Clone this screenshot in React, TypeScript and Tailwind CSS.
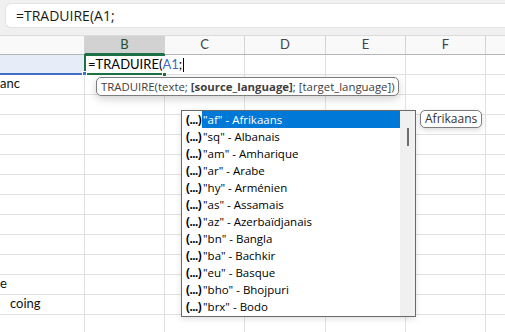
import React from "react";

const cols = [85, 80, 80, 81, 80, 80, 40];
const letters = ["", "B", "C", "D", "E", "F", ""];
const langs: [string, string][] = [
  ["af", "Afrikaans"],
  ["sq", "Albanais"],
  ["am", "Amharique"],
  ["ar", "Arabe"],
  ["hy", "Arménien"],
  ["as", "Assamais"],
  ["az", "Azerbaïdjanais"],
  ["bn", "Bangla"],
  ["ba", "Bachkir"],
  ["eu", "Basque"],
  ["bho", "Bhojpuri"],
  ["brx", "Bodo"],
];

const aText: Record<number, React.ReactNode> = {
  1: <span>anc</span>,
  11: <span>e</span>,
  12: <span className="pl-[10px]">coing</span>,
};

export default function App() {
  const rows = Array.from({ length: 14 }, (_, i) => i);
  return (
    <div className="relative w-[505px] h-[332px] overflow-hidden bg-white" style={{ fontFamily: "Lato, 'Open Sans', sans-serif" }}>
      {/* formula bar */}
      <div className="h-[35px] bg-[#f0f0f0] pt-[3px] pl-[5px]">
        <div className="h-[25px] bg-white rounded-l-[6px] border border-[#e4e4e4] border-r-0 flex items-center pl-[10px] text-[14px] text-[#1a1a1a]" style={{ fontFamily: "'Open Sans', sans-serif" }}>
          =TRADUIRE(A1;
        </div>
      </div>
      {/* column headers */}
      <div className="flex h-[20px] bg-[#f9f9f9] border-t border-[#dcdcdc] border-b border-b-[#b5b5b5]">
        {cols.map((w, i) => (
          <div
            key={i}
            style={{ width: w }}
            className={
              "shrink-0 flex items-center justify-center text-[13px] border-r border-[#d4d4d4] " +
              (i === 1 ? "bg-[#d2d2d2] text-[#1f4e30] border-b-2 border-b-[#1e7145] -mb-px" : "text-[#444]")
            }
          >
            {letters[i]}
          </div>
        ))}
      </div>
      {/* grid rows */}
      <div className="flex flex-col">
        {rows.map((r) => (
          <div key={r} className="flex h-[20px]">
            {cols.map((w, i) => {
              const isA1 = r === 0 && i === 0;
              const isB1 = r === 0 && i === 1;
              return (
                <div
                  key={i}
                  style={{ width: w }}
                  className={
                    "shrink-0 relative border-r border-b border-[#e1e1e1] text-[13px] text-[#111] " +
                    (isA1 ? "bg-[#e6edf8] border-b-2 border-b-[#3f6fc5]" : "") +
                    (isB1 ? " z-10" : "")
                  }
                >
                  {i === 0 && aText[r] && (
                    <div className="h-full flex items-end pb-[1px] overflow-hidden whitespace-nowrap">{aText[r]}</div>
                  )}
                  {isA1 && <div className="absolute right-[-3px] bottom-[-3px] w-[5px] h-[5px] bg-[#3f6fc5] border border-white z-20" />}
                  {isB1 && (
                    <>
                      <div className="absolute inset-[-1px] border-2 border-[#1e7145]" />
                      <div className="absolute left-[2px] top-[1px] h-[17px] pl-[1px] pr-[2px] bg-white z-10 flex items-center whitespace-nowrap text-[13px] text-black">
                        =TRADUIRE(<span className="text-[#3a6bc0]">A1</span>;
                        <span className="ml-[1px] w-px h-[14px] bg-black" />
                      </div>
                      <div className="absolute right-[-3px] bottom-[-3px] w-[5px] h-[5px] bg-[#1e7145] border border-white z-20" />
                    </>
                  )}
                </div>
              );
            })}
          </div>
        ))}
      </div>

      {/* function tooltip */}
      <div
        className="absolute left-[96px] top-[77px] w-[303px] h-[19px] px-[4px] flex items-center bg-white border border-[#7d7d7d] rounded-[5px] shadow-[0_3px_8px_rgba(0,0,0,0.18)] text-[11.4px] text-[#404040] whitespace-nowrap z-30"
        style={{ fontFamily: "'Open Sans', sans-serif" }}
      >
        TRADUIRE(texte; <span className="font-bold ml-[3px]">[source_language]</span>; [target_language])
      </div>

      {/* dropdown */}
      <div
        className="absolute left-[181px] top-[110px] w-[235px] h-[207px] bg-white border border-[#6a6a6a] flex z-30 shadow-[0_2px_6px_rgba(0,0,0,0.12)]"
        style={{ fontFamily: "'Open Sans', sans-serif" }}
      >
        <div className="flex-1 flex flex-col">
          {langs.map(([code, name], i) => (
            <div key={code} className="h-[17px] flex items-center text-[11.5px] text-black whitespace-nowrap">
              <span className="w-[20px] pl-[4px] font-bold text-[11.5px] tracking-[-0.5px] shrink-0">(...)</span>
              <span className={"flex-1 h-full flex items-center pl-[1px] " + (i === 0 ? "bg-[#0078d7] text-white" : "")}>
                "{code}" - {name}
              </span>
            </div>
          ))}
        </div>
        <div className="w-[15px] bg-[#f0f0f0] flex justify-center pt-[17px]">
          <div className="w-[2px] h-[18px] bg-[#6d6d6d]" />
        </div>
      </div>

      {/* value tooltip */}
      <div
        className="absolute left-[420px] top-[110px] h-[18px] px-[4px] flex items-center bg-white border border-[#7d7d7d] rounded-[5px] shadow-[0_2px_5px_rgba(0,0,0,0.15)] text-[12px] text-[#333] z-30"
        style={{ fontFamily: "'Open Sans', sans-serif" }}
      >
        Afrikaans
      </div>
    </div>
  );
}
